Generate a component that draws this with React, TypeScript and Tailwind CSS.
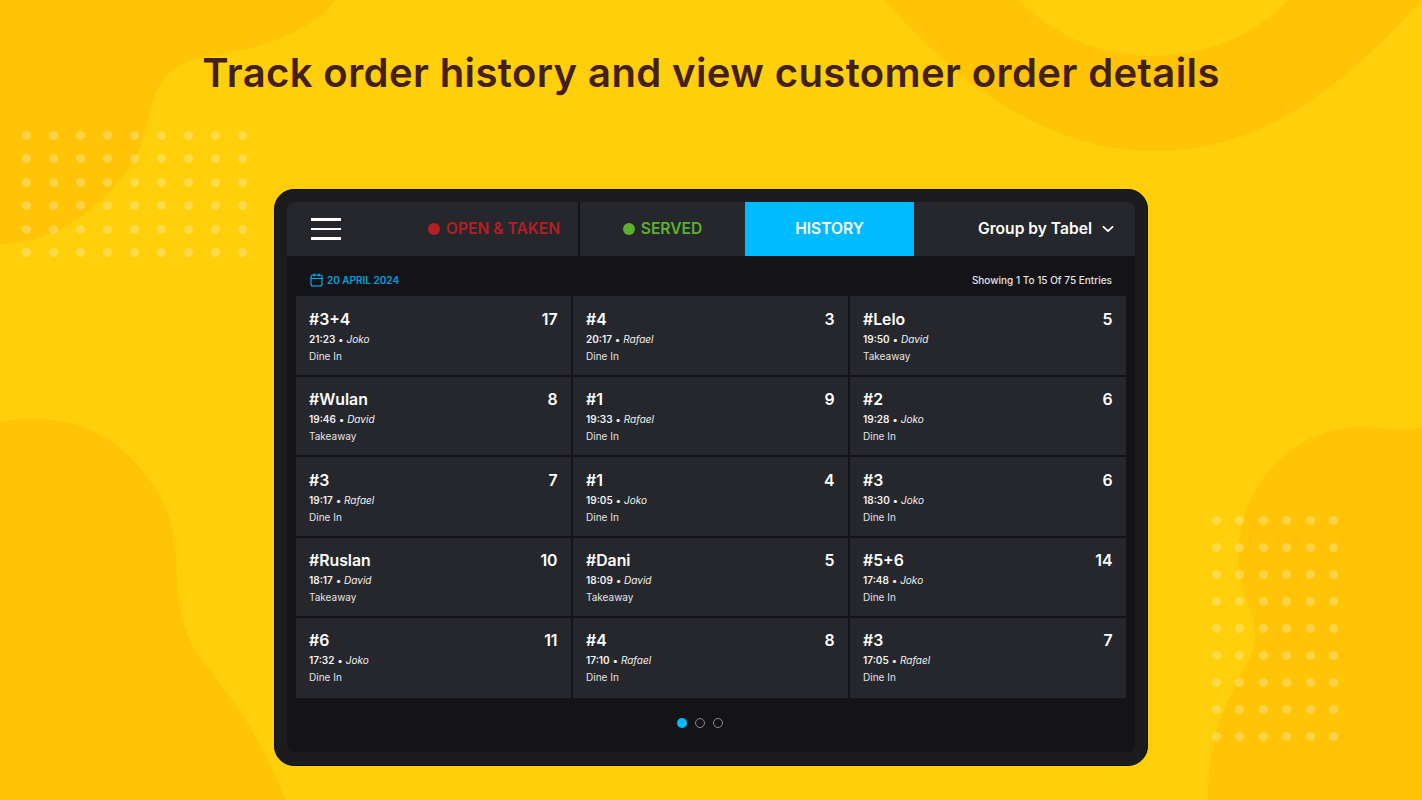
const orders = [
  { name: "#3+4", count: 17, time: "21:23", staff: "Joko", type: "Dine In" },
  { name: "#4", count: 3, time: "20:17", staff: "Rafael", type: "Dine In" },
  { name: "#Lelo", count: 5, time: "19:50", staff: "David", type: "Takeaway" },
  { name: "#Wulan", count: 8, time: "19:46", staff: "David", type: "Takeaway" },
  { name: "#1", count: 9, time: "19:33", staff: "Rafael", type: "Dine In" },
  { name: "#2", count: 6, time: "19:28", staff: "Joko", type: "Dine In" },
  { name: "#3", count: 7, time: "19:17", staff: "Rafael", type: "Dine In" },
  { name: "#1", count: 4, time: "19:05", staff: "Joko", type: "Dine In" },
  { name: "#3", count: 6, time: "18:30", staff: "Joko", type: "Dine In" },
  { name: "#Ruslan", count: 10, time: "18:17", staff: "David", type: "Takeaway" },
  { name: "#Dani", count: 5, time: "18:09", staff: "David", type: "Takeaway" },
  { name: "#5+6", count: 14, time: "17:48", staff: "Joko", type: "Dine In" },
  { name: "#6", count: 11, time: "17:32", staff: "Joko", type: "Dine In" },
  { name: "#4", count: 8, time: "17:10", staff: "Rafael", type: "Dine In" },
  { name: "#3", count: 7, time: "17:05", staff: "Rafael", type: "Dine In" },
];

function Dots({ cols, rows, className }: { cols: number; rows: number; className: string }) {
  return (
    <div className={className}>
      {Array.from({ length: cols * rows }).map((_, i) => (
        <span key={i} className="size-[9px] rounded-full bg-white/25" />
      ))}
    </div>
  );
}

function Blobs() {
  return (
    <svg className="absolute inset-0" width="1422" height="800" viewBox="0 0 1422 800" fill="#FFC408">
      {/* top left */}
      <path d="M0 244C70 243 125 185 140 147C150 120 150 90 170 72C190 55 225 55 255 47C290 37 320 20 336 0H0Z" />
      {/* top right, with the lighter bite along the top edge */}
      <path d="M885 0C950 75 1040 151 1154 151C1260 151 1340 90 1422 0H1289C1255 35 1205 56 1154 56C1105 56 1060 40 1018 0Z" />
      {/* bottom left */}
      <path d="M0 422C35 413 85 420 120 448C160 482 175 520 176 560C177 600 180 632 205 665C235 700 265 745 285 800H0Z" />
      {/* bottom right */}
      <path d="M1422 427C1400 433 1385 427 1360 427C1290 427 1238 490 1238 557C1238 590 1255 610 1255 637C1255 670 1208 700 1208 800H1422Z" />
    </svg>
  );
}

export default function App() {
  return (
    <div className="relative h-[800px] w-[1422px] overflow-hidden bg-[#FFCF0B] font-['Inter',sans-serif]">
      <Blobs />
      <Dots cols={9} rows={6} className="absolute left-[22px] top-[130.5px] grid grid-cols-[repeat(9,9px)] gap-x-[18px] gap-y-[14.6px]" />
      <Dots cols={6} rows={9} className="absolute left-[1211.5px] top-[515.5px] grid grid-cols-[repeat(6,9px)] gap-x-[14.6px] gap-y-[18px]" />

      <div className="relative flex flex-col items-center">
        <h1 className="mt-[49px] text-[40px] leading-[48px] font-semibold tracking-[0.4px] text-[#43201C]">
          Track order history and view customer order details
        </h1>

        <div className="mt-[92px] h-[577px] w-[874px] rounded-[20px] border border-[#0d0d10] bg-[#1C1C1E] p-3">
          <div className="flex h-[550px] flex-col overflow-hidden rounded-[8px] bg-[#131318]">
            <header className="flex h-[54px] bg-[#25272C]">
              <div className="flex w-[291px] items-center justify-between pr-[18px] pl-6">
                <div className="flex w-[30px] flex-col gap-[7px]">
                  <span className="h-[2.5px] bg-white" />
                  <span className="h-[2.5px] bg-white" />
                  <span className="h-[2.5px] bg-white" />
                </div>
                <div className="flex items-center gap-[6px] text-[15.6px] font-semibold text-[#B31F23]">
                  <span className="size-3 rounded-full bg-[#B31F23]" />
                  OPEN &amp; TAKEN
                </div>
              </div>
              <div className="w-[2px] bg-[#131318]" />
              <div className="flex w-[165px] items-center justify-center gap-[6px] text-[15.6px] font-semibold text-[#5DB02B]">
                <span className="size-3 rounded-full bg-[#5DB02B]" />
                SERVED
              </div>
              <div className="flex w-[169px] items-center justify-center bg-[#00BBFF] text-[15.6px] font-semibold text-white">
                HISTORY
              </div>
              <div className="flex flex-1 items-center justify-end gap-[9px] pr-5 text-[15.6px] font-semibold text-white">
                Group by Tabel
                <svg width="14" height="14" viewBox="0 0 14 14" fill="none" stroke="currentColor" strokeWidth="1.8" strokeLinecap="round" strokeLinejoin="round">
                  <path d="M2.5 4.8 7 9.2l4.5-4.4" />
                </svg>
              </div>
            </header>

            <div className="flex h-[40px] items-center justify-between px-[23px] pt-[8px]">
              <div className="flex items-center gap-[4px] text-[10px] font-semibold text-[#00A3DE]">
                <svg width="13" height="14" viewBox="0 0 13 14" fill="none" stroke="#00BBFF" strokeWidth="1.1" strokeLinecap="round">
                  <rect x="1" y="2" width="11" height="11" rx="2" />
                  <path d="M1 5.5h11M4 .8v2.4M9 .8v2.4" />
                </svg>
                20 APRIL 2024
              </div>
              <div className="text-[10px] font-medium text-[#E4E4E4]">Showing 1 To 15 Of 75 Entries</div>
            </div>

            <div className="mx-[9px] grid grid-cols-[275px_275px_276px] grid-rows-[78.5px_78.5px_78.5px_78px_80px] gap-x-[2px] gap-y-[2px]">
              {orders.map((order, i) => (
                <div key={i} className="flex flex-col bg-[#25272C] pt-[13.5px] pr-[13.5px] pl-[13px] text-white">
                  <div className="flex items-center justify-between text-[15.8px] leading-[19px] font-semibold">
                    <span>{order.name}</span>
                    <span>{order.count}</span>
                  </div>
                  <div className="mt-[3px] text-[10px] leading-[14px] text-[#F2F2F2]">
                    <span className="font-semibold">{order.time}</span>
                    <span> • </span>
                    <span className="italic">{order.staff}</span>
                  </div>
                  <div className="mt-[3px] text-[10px] leading-[14px] text-[#E4E4E4]">{order.type}</div>
                </div>
              ))}
            </div>

            <div className="flex flex-1 items-center gap-2 pb-[3px] pl-[390px]">
              <span className="size-[10px] rounded-full bg-[#00BBFF]" />
              <span className="size-[10px] rounded-full border border-[#8a8a8e]" />
              <span className="size-[10px] rounded-full border border-[#8a8a8e]" />
            </div>
          </div>
        </div>
      </div>
    </div>
  );
}
